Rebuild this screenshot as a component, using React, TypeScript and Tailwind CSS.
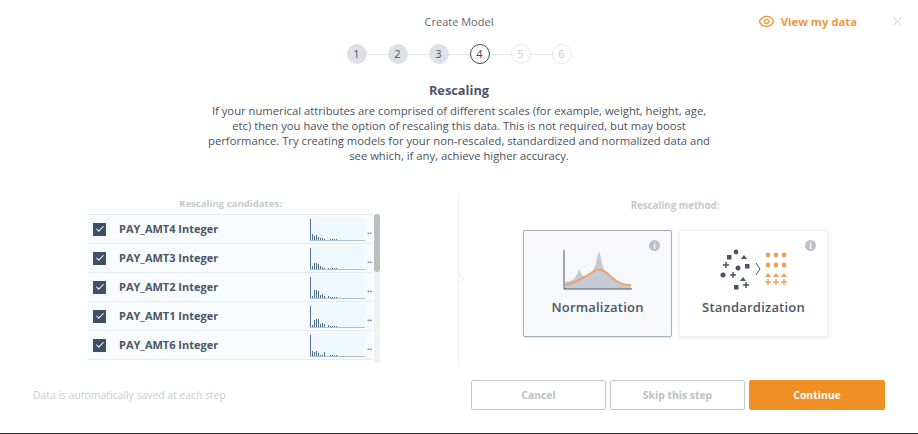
import { Check, X, Eye, ChevronRight } from 'lucide-react';

const steps = [1, 2, 3, 4, 5, 6];

const candidates = [
  { name: 'PAY_AMT4 Integer', bars: [21, 6, 4, 5, 3, 2, 2, 1, 0, 0, 1, 1, 1, 1] },
  { name: 'PAY_AMT3 Integer', bars: [21, 3, 6, 6, 5, 3, 2, 1, 0, 1, 0, 1, 1, 1] },
  { name: 'PAY_AMT2 Integer', bars: [21, 2, 8, 8, 7, 3, 4, 2, 0, 2, 1, 1, 1, 1] },
  { name: 'PAY_AMT1 Integer', bars: [21, 2, 7, 8, 8, 3, 4, 3, 0, 2, 1, 1, 1, 1] },
  { name: 'PAY_AMT6 Integer', bars: [21, 5, 4, 5, 3, 1, 1, 4, 0, 0, 1, 1, 1, 1] },
];

function Stepper() {
  return (
    <div className="flex items-center justify-center">
      {steps.map((step, i) => (
        <div key={step} className="flex items-center">
          {i > 0 && <div className="h-px w-[21px] bg-[#e6e8ec]" />}
          <div
            className={
              'flex size-[20px] items-center justify-center rounded-full text-[11px] ' +
              (step < 4
                ? 'bg-[#dde0e6] text-[#4a5568]'
                : step === 4
                  ? 'border border-[#3d4654] bg-white text-[#3d4654]'
                  : 'border border-[#e8e9ec] bg-white text-[#c4c7cc]')
            }
          >
            {step}
          </div>
        </div>
      ))}
    </div>
  );
}

function Histogram({ bars }: { bars: number[] }) {
  return (
    <div className="flex h-[24px] w-[55px] items-end gap-px self-start border-b border-[#a9c1d3] bg-[#eff8fd]">
      {bars.map((h, i) => (
        <div key={i} className="w-px bg-[#4f6f90]" style={{ height: h }} />
      ))}
    </div>
  );
}

function CandidateRow({ name, bars }: { name: string; bars: number[] }) {
  return (
    <div className="flex h-[29px] items-center border-b border-[#e6ebf0] bg-[#f7fbfe] pl-[5px]">
      <div className="flex size-[13px] items-center justify-center bg-[#3f4f66]">
        <Check size={10} strokeWidth={2.5} className="text-white" />
      </div>
      <span className="ml-[13px] text-[11px] font-bold text-[#4b5563]">{name}</span>
      <div className="ml-auto flex h-full items-center pt-[2px]">
        <Histogram bars={bars} />
        <span className="ml-[2px] w-[6px] text-[9px] leading-none font-bold text-[#5a6472]">..</span>
      </div>
    </div>
  );
}

function NormalizationIcon() {
  return (
    <svg width="70" height="42" viewBox="0 0 70 42">
      <path
        d="M2 40 L2 33 C8 32 11 31 13 27 L15 23 L16 20 L18 24 C21 30 25 28 28 24 C31 21 33 16 34 9 L36 2 L38 9 C39 16 41 22 45 26 C50 31 56 35 68 36 L68 40 Z"
        fill="#c5cbd5"
      />
      <path d="M1 1 V40 H69" fill="none" stroke="#4a5568" strokeWidth="1" />
      <path
        d="M2 36 C14 34 22 28 28 24 C33 20 39 20 44 24 C50 30 56 36 68 36"
        fill="none"
        stroke="#eda468"
        strokeWidth="2"
      />
    </svg>
  );
}

function StandardizationIcon() {
  const dark = '#4b5563';
  const orange = '#ed9f5a';
  return (
    <svg width="70" height="42" viewBox="0 0 70 42">
      <rect x="8" y="6" width="4.5" height="4.5" fill={dark} />
      <circle cx="17" cy="3" r="2.4" fill={dark} />
      <path d="M22 10 L25 6 L28 10 Z" fill={dark} />
      <path d="M4 16 H10 M7 13 V19" stroke={dark} strokeWidth="1.5" />
      <circle cx="19" cy="19" r="2.5" fill={dark} />
      <rect x="26" y="15" width="4.5" height="4.5" fill={dark} />
      <circle cx="4" cy="26" r="2.5" fill={dark} />
      <path d="M11 26 H17 M14 23 V29" stroke={dark} strokeWidth="1.5" />
      <path d="M21 32 L24 28 L27 32 Z" fill={dark} />
      <rect x="15" y="36" width="4.5" height="4.5" fill={dark} />
      <path d="M24 36 H30 M27 33 V39" stroke={dark} strokeWidth="1.5" />
      <path d="M37 14 L41 20 L37 26" fill="none" stroke={dark} strokeWidth="1" />
      {[49, 57, 65].map((x) =>
        [6, 16].map((y) => <circle key={`${x}-${y}`} cx={x} cy={y} r="2.4" fill={orange} />)
      )}
      {[49, 57, 65].map((x) => (
        <path key={x} d={`M${x - 3} 28 L${x} 24 L${x + 3} 28 Z`} fill={orange} />
      ))}
      {[49, 57, 65].map((x) => (
        <path key={x} d={`M${x - 3} 33 H${x + 3} M${x} 30 V36`} stroke={orange} strokeWidth="1.4" />
      ))}
    </svg>
  );
}

function MethodCard({
  label,
  selected,
  children,
}: {
  label: string;
  selected?: boolean;
  children: React.ReactNode;
}) {
  return (
    <div
      className={
        'relative flex h-[107px] w-[149px] flex-col items-center rounded-[2px] pt-[18px] ' +
        (selected
          ? 'border border-[#a8afba] bg-[#f6f8fb] shadow-sm'
          : 'border border-[#f0f1f3] bg-white shadow-[0_1px_4px_rgba(0,0,0,0.1)]')
      }
    >
      <div className="absolute top-[9px] right-[11px] flex size-[11px] items-center justify-center rounded-full bg-[#bcc0c8] text-[8px] leading-none font-bold text-white">
        i
      </div>
      {children}
      <div className="mt-[7px] text-[13px] font-semibold tracking-[0.2px] text-[#4f5661]">{label}</div>
    </div>
  );
}

export default function App() {
  return (
    <div
      className="flex h-[434px] w-[918px] flex-col overflow-hidden border-b border-[#333] bg-white text-[#4a5568]"
      style={{ fontFamily: '"Open Sans", sans-serif' }}
    >
      <header className="grid grid-cols-[1fr_auto_1fr] items-center pt-[13px]">
        <div />
        <div className="text-[11px] leading-[16px] text-[#5e6673]">Create Model</div>
        <div className="flex items-center justify-end pr-[13px]">
          <Eye size={17} className="text-[#ec9a45]" />
          <span className="ml-[6px] text-[11.3px] leading-[16px] font-bold text-[#ec9a45]">View my data</span>
          <X size={15} strokeWidth={1.5} className="ml-[33px] text-[#c6cbd2]" />
        </div>
      </header>

      <div className="mt-[14px]">
        <Stepper />
      </div>

      <div className="mt-[16px] text-center text-[12.8px] leading-[20px] font-bold text-[#4a5568]">Rescaling</div>

      <p className="mx-auto mt-[3px] w-[510px] text-center text-[11.25px] leading-[15px] text-[#4a5260]">
        If your numerical attributes are comprised of different scales (for example, weight, height, age, etc) then you
        have the option of rescaling this data. This is not required, but may boost performance. Try creating models for
        your non-rescaled, standardized and normalized data and see which, if any, achieve higher accuracy.
      </p>

      <main className="mt-[32px] flex h-[170px]">
        <section className="w-[458px] pl-[88px] pt-[2px]">
          <div className="w-[285px] text-center text-[9.6px] leading-[14px] font-bold text-[#c6c9ce]">
            Rescaling candidates:
          </div>
          <div className="mt-[3px] flex h-[150px] w-[292px] overflow-hidden">
            <div className="w-[285px] border-t border-[#e6ebf0]">
              {candidates.map((c) => (
                <CandidateRow key={c.name} name={c.name} bars={c.bars} />
              ))}
            </div>
            <div className="ml-px h-[149px] w-[6px] rounded-sm bg-[#f2f2f2]">
              <div className="h-[58px] w-[6px] rounded-sm bg-[#bdbdbd]" />
            </div>
          </div>
        </section>

        <div className="relative h-[170px] w-px bg-[#eceef0]">
          <ChevronRight size={18} strokeWidth={1} className="absolute top-[75px] left-[-5px] text-[#dcdfe3]" />
        </div>

        <section className="flex-1 pl-[64px] pt-[4px]">
          <div className="w-[304px] text-center text-[9.7px] leading-[14px] font-bold text-[#c6c9ce]">
            Rescaling method:
          </div>
          <div className="mt-[17px] flex gap-[7px]">
            <MethodCard label="Normalization" selected>
              <NormalizationIcon />
            </MethodCard>
            <MethodCard label="Standardization">
              <StandardizationIcon />
            </MethodCard>
          </div>
        </section>
      </main>

      <footer className="mt-[15px] flex items-center pl-[33px]">
        <span className="pt-px text-[10.4px] text-[#c9cbcf]">Data is automatically saved at each step</span>
        <div className="ml-auto flex gap-[4px] pr-[33px]">
          <button className="h-[30px] w-[135px] rounded-[2px] border border-[#c4c8cd] bg-white pt-px text-[10.4px] font-bold text-[#bcbfc4]">
            Cancel
          </button>
          <button className="h-[30px] w-[135px] rounded-[2px] border border-[#c4c8cd] bg-white pt-px text-[10.4px] font-bold text-[#bcbfc4]">
            Skip this step
          </button>
          <button className="h-[30px] w-[136px] rounded-[2px] bg-[#f08f24] pt-px text-[10.4px] font-bold text-white">
            Continue
          </button>
        </div>
      </footer>
    </div>
  );
}
